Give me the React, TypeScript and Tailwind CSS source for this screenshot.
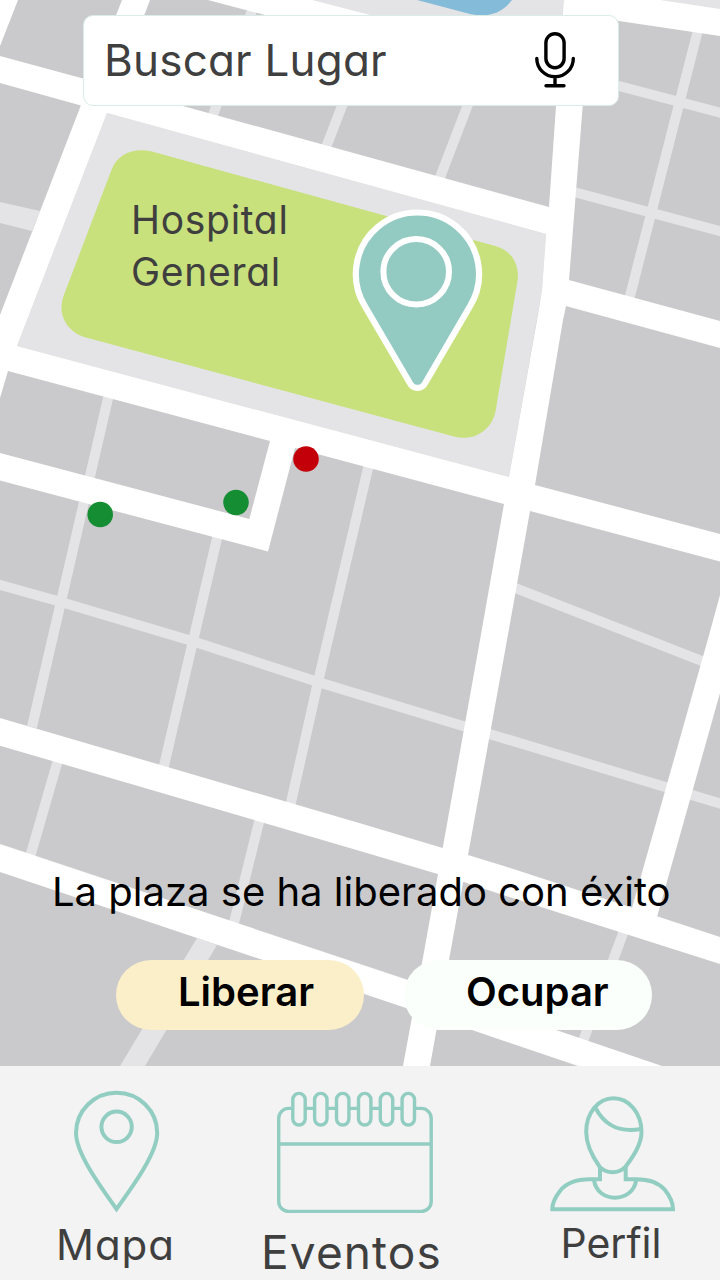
const ALLEYS = [
  "253,8 213,115",
  "352,80 325,150",
  "472,94 439,180",
  "698,30 629,300",
  "583,76 619,86 725,114",
  "572,191.5 725,232.5",
  "109,394 32,727",
  "218,534 193,641 163,770",
  "369,464 318,682 290,807",
  "-5,583.5 61,602 192,641 318,682 463,726 725,805",
  "513,587.2 706,662.7",
  "58,760 30,857",
  "260,818 233,927",
  "625,928 582,1044",
];

const ROADS = [
  "0,0 18,0 0,46",
  "122,0 150,0 107,113 17,346 8,371 0,398 0,315 81,105",
  "0,56 83,78.5 183,106 549,207 560,210 556,237 546,234 107,113 81,105.5 0,83",
  "208,0 312,0 370,15 564,40 564,90 265,15",
  "10,344 17,346 509,477 535,485 720,534 720,561.5 530,511 504,504 295,448 268,551.5 0,480.5 0,453 249.3,519 270,441 8,371 3,369",
  "564,0 660,0 720,9 720,36 619,21 585,17 582.7,106 569,280 566,306 563,320 535,485 530,511 507,640 468,855 449,960 430,1066 403,1066 422,963 442.7,848 480,640 504,504 509,477 537,320 542,290 546,234 549,207 556,106",
  "565,279 720,321 720,348 564,305.5",
  "0,718 360,823.3 442.7,848 468,855 503,865.7 632,907.7 657,916.3 720,937 720,964 500,894 463,881.7 437.7,874 360,851 0,745.7",
  "720,595 707.7,640 632,908 657,917 720,693",
  "0,844 360,964 405,979 556,1030 662,1066 578,1066 472,1030 406,1008 263,960 0,872",
];

function CityMap() {
  return (
    <svg className="absolute inset-0 h-full w-full" viewBox="0 0 720 1066" aria-hidden="true">
      <rect width="720" height="1066" fill="#cacacc" />
      <g fill="none" stroke="#e4e4e6" strokeWidth="10">
        {ALLEYS.map((points) => (
          <polyline key={points} points={points} />
        ))}
      </g>
      <g fill="#e4e4e6">
        <path d="M0 202L40 211L32 231L0 223Z" />
        <path d="M197 938L217 945L145 1066H120Z" />
        <path d="M300 0H566V50H370Z" />
        <path d="M650 0H720V12Z" />
        <path d="M107 113L546 234L542 290L509 477L17 346Z" />
      </g>
      <g fill="#fff">
        {ROADS.map((points) => (
          <polygon key={points} points={points} />
        ))}
      </g>
      <path d="M417 0L470 14Q497 20 512 0Z" fill="#84bbd9" />
      <path
        d="M112 168.500C118 154 134 147 152 151.500L497 246.500C511 251 520 264 517.500 281L495.600 411C492 430 474 442 454 436.500L86 337.500C67 332 57 315 63.500 296Z"
        fill="#c8e17c"
      />
      <path
        d="M364.700 305.900A61.600 61.600 0 1 1 470.200 305.900L425.500 382.500C422 389.700 413 389.700 409.500 382.500Z"
        fill="#93cbc2"
        stroke="#fff"
        strokeWidth="6.200"
      />
      <circle cx="416.200" cy="271.700" r="32.800" fill="none" stroke="#fff" strokeWidth="6" />
      <circle cx="100.200" cy="514.500" r="12.800" fill="#158d33" />
      <circle cx="236" cy="502.500" r="12.800" fill="#158d33" />
      <circle cx="306" cy="459" r="12.800" fill="#c3000a" />
    </svg>
  );
}

function MicIcon() {
  return (
    <svg
      className="mb-[2px] h-[60px] w-[44px]"
      viewBox="533 30 44 60"
      fill="none"
      stroke="#000"
      strokeWidth="3.4"
      strokeLinecap="round"
    >
      <rect x="545.900" y="33.700" width="18.200" height="34" rx="9.100" />
      <path d="M536.800 58.500a18.200 18.200 0 0 0 36.500 0M555 77v8.700M546 85.700h18" />
    </svg>
  );
}

function PinIcon() {
  return (
    <svg className="h-[128px] w-[93px]" viewBox="70 1086 93 128" fill="none" stroke="#92cdc1" strokeWidth="4">
      <path d="M116.500 1209C97 1182 76 1152 76 1133A40.500 40.200 0 0 1 157.200 1133C157.200 1152 136 1182 116.500 1209Z" />
      <circle cx="116.600" cy="1126.800" r="15.200" />
    </svg>
  );
}

const RINGS = [299, 320.8, 342.7, 364.7, 386.5, 408.3];

function CalendarIcon() {
  return (
    <svg className="h-[128px] w-[160px]" viewBox="275 1086 160 128" fill="none" stroke="#92cdc1" strokeWidth="3.4">
      <rect x="278.700" y="1108.400" width="152.500" height="103" rx="10" />
      <path d="M279 1144h152" />
      {RINGS.map((x) => (
        <rect key={x} x={x - 6.2} y="1093.400" width="12.400" height="31.600" rx="6.200" fill="#f3f3f3" />
      ))}
    </svg>
  );
}

function PersonIcon() {
  return (
    <svg className="h-[128px] w-[130px]" viewBox="548 1086 130 128" fill="none" stroke="#92cdc1" strokeWidth="4">
      <path d="M613.500 1098.200C629 1098.200 641.500 1113 641.500 1132C641.500 1145 632 1158 625.700 1166.500C619 1174 606 1174 599.500 1166.500C592 1156 586.200 1145 586.200 1132C586.200 1113 598 1098.200 613.500 1098.200Z" />
      <path d="M595.500 1108C604 1124 617 1133 641 1129" />
      <path d="M600 1166.500V1179.300H590C575 1179.300 566 1183 560 1191C554.500 1198 552.300 1203 552.300 1209.200H673C673 1203 670.500 1197 665 1190C659 1183 650 1179.300 636 1179.300H625.700V1166.500" />
      <path d="M594 1180C597 1203.500 633 1203.500 636.200 1180" />
    </svg>
  );
}

export default function App() {
  return (
    <div className="flex h-[1280px] w-[720px] flex-col overflow-hidden bg-[#f3f3f3] font-['Inter','Liberation_Sans',sans-serif] text-[#3f3f3f]">
      <main className="relative h-[1066px] shrink-0">
        <CityMap />
        <div className="relative flex h-full flex-col whitespace-nowrap">
          <div className="mt-[15px] ml-[83px] flex h-[91px] w-[536px] items-center justify-between rounded-[10px] border border-[#d9ece8] bg-white pr-[41px] pl-5">
            <span className="mb-[2px] text-[44px] leading-none tracking-[0.2px] [font-feature-settings:'cv11']">Buscar Lugar</span>
            <MicIcon />
          </div>
          <p className="mt-[88px] ml-[131px] text-[39px] leading-[51.500px] tracking-[0.7px] [font-feature-settings:'cv11']">
            Hospital
            <br />
            General
          </p>
          <p className="mt-[575px] ml-[52px] text-[40px] leading-none text-black">
            La plaza se ha liberado con éxito
          </p>
          <div className="mt-auto mb-[36px] ml-[116px] flex gap-[40px] text-[40px] leading-none font-semibold text-black">
            <button className="flex h-[70px] w-[248px] rounded-full bg-[#fbefc9] pt-[12px] pl-[62px]">Liberar</button>
            <button className="flex h-[70px] w-[248px] rounded-full bg-[#fbfffb] pt-[12px] pl-[62px]">Ocupar</button>
          </div>
        </div>
      </main>
      <nav className="flex h-[214px] pt-[20px] leading-none [font-feature-settings:'cv11']">
        <a className="flex w-[233px] flex-col items-center">
          <PinIcon />
          <span className="mt-[10px] -ml-[2px] text-[42px] leading-none tracking-[1px]">Mapa</span>
        </a>
        <a className="flex w-[244px] flex-col items-center">
          <CalendarIcon />
          <span className="mt-[15px] -ml-[7px] text-[46px] leading-none tracking-[1.1px]">Eventos</span>
        </a>
        <a className="flex w-[243px] flex-col items-center pl-[28px]">
          <PersonIcon />
          <span className="mt-[9px] -ml-[3px] text-[41px] leading-none">Perfil</span>
        </a>
      </nav>
    </div>
  );
}
